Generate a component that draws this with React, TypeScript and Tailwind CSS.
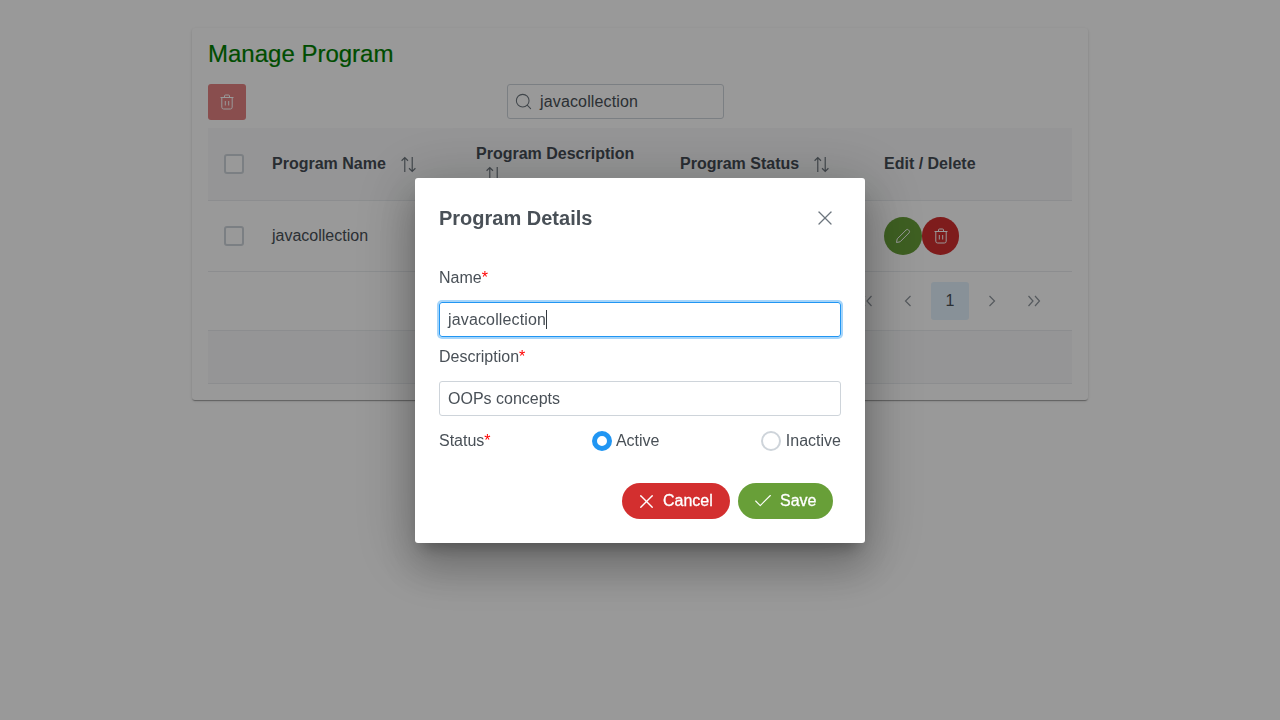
import React from 'react';
import { Search, X, Check } from 'lucide-react';

const TrashIcon: React.FC<{ className?: string }> = ({ className }) => (
    <svg viewBox="0 0 16 16" fill="none" stroke="currentColor" strokeWidth="1" className={className}>
        <path d="M1.5 3.5h13" />
        <path d="M5.5 3.5V2a1 1 0 0 1 1-1h3a1 1 0 0 1 1 1v1.5" />
        <path d="M2.8 3.5v9.7a1.8 1.8 0 0 0 1.8 1.8h6.8a1.8 1.8 0 0 0 1.8-1.8V3.5" />
        <path d="M6.3 7v4.5M9.7 7v4.5" />
    </svg>
);

const PencilIcon: React.FC<{ className?: string }> = ({ className }) => (
    <svg viewBox="0 0 16 16" fill="none" stroke="currentColor" strokeWidth="1" className={className}>
        <path d="M1.5 14.5l.7-3.6 8.9-8.9a1.7 1.7 0 0 1 2.4 0l.5.5a1.7 1.7 0 0 1 0 2.4l-8.9 8.9z" />
    </svg>
);

const SortIcon: React.FC<{ className?: string }> = ({ className }) => (
    <svg viewBox="0 0 16 16" fill="none" stroke="currentColor" strokeWidth="1.1" className={className}>
        <path d="M4.5 15V1.5M1.5 4.5l3-3 3 3" />
        <path d="M11.5 1v13.5M8.5 11.5l3 3 3-3" />
    </svg>
);

// paginator arrows, d differs per direction
const PageArrow: React.FC<{ d: string }> = ({ d }) => (
    <div className="w-[38px] h-[38px] flex items-center justify-center">
        <svg viewBox="0 0 16 16" fill="none" stroke="currentColor" strokeWidth="1.2" className="w-4 h-4">
            <path d={d} />
        </svg>
    </div>
);

const Box: React.FC = () => (
    <div className="w-5 h-5 rounded-[3px] border-2 border-[#ced4da] bg-white"></div>
);

const Required: React.FC = () => <span className="text-[#ff0000]">*</span>;

const App: React.FC = () => {
    return (
        <div className="relative min-h-[720px] bg-white font-['Liberation_Sans',Arial,sans-serif] text-[#495057] text-base">
            <div className="pt-7 flex justify-center">
                <div className="w-[896px] h-[372px] bg-white rounded-[3px] p-4 pt-3 shadow-[0_2px_1px_-1px_rgba(0,0,0,0.2),0_1px_1px_0_rgba(0,0,0,0.14),0_1px_3px_0_rgba(0,0,0,0.12)]">
                    <h1 className="text-2xl leading-7 text-[#008000] [-webkit-text-stroke:0.2px_#008000]">Manage Program</h1>

                    <div className="mt-[16px] h-9 flex items-start">
                        <div className="w-[38px] h-9 rounded-[3px] bg-[#D32F2F]/60 flex items-center justify-center text-white">
                            <TrashIcon className="w-4 h-4" />
                        </div>
                        <div className="ml-[261px] w-[217px] h-[35px] rounded-[3px] border border-[#ced4da] bg-white flex items-center pl-[6px]">
                            <Search className="w-[19px] h-[19px] text-[#6c757d] shrink-0" strokeWidth={1.3} />
                            <span className="ml-[7px] pt-px tracking-[0.15px]">javacollection</span>
                        </div>
                    </div>

                    <div className="mt-2 grid grid-cols-[64px_204px_204px_204px_188px] h-[73px] bg-[#f8f9fa] border-b border-[#e9ecef] items-center font-bold text-[#454c54]">
                        <div className="pl-4"><Box /></div>
                        <div className="flex items-center">
                            Program Name
                            <SortIcon className="ml-[14px] w-[17px] h-[17px] text-[#6c757d]" />
                        </div>
                        <div className="leading-5 pb-0.5">
                            Program Description
                            <SortIcon className="ml-[9px] mt-0.5 w-[17px] h-[17px] text-[#6c757d]" />
                        </div>
                        <div className="flex items-center">
                            Program Status
                            <SortIcon className="ml-[14px] w-[17px] h-[17px] text-[#6c757d]" />
                        </div>
                        <div>Edit / Delete</div>
                    </div>

                    <div className="grid grid-cols-[64px_204px_204px_204px_188px] h-[71px] border-b border-[#e9ecef] items-center">
                        <div className="pl-4"><Box /></div>
                        <div>javacollection</div>
                        <div>OOPs concepts</div>
                        <div>Active</div>
                        <div className="flex">
                            <div className="w-[38px] h-[38px] rounded-full bg-[#689F38] flex items-center justify-center text-white">
                                <PencilIcon className="w-4 h-4" />
                            </div>
                            <div className="w-[37px] h-[38px] rounded-full bg-[#D32F2F] flex items-center justify-center text-white">
                                <TrashIcon className="w-4 h-4" />
                            </div>
                        </div>
                    </div>

                    <div className="h-[58px] flex items-center justify-end pr-[19px] gap-1 text-[#8f969d]">
                        <PageArrow d="M7 3L2.5 8 7 13M13.5 3L9 8l4.5 5" />
                        <PageArrow d="M10.5 3L5.5 8l5 5" />
                        <div className="w-[38px] h-[38px] rounded-[3px] bg-[#E3F2FD] text-[#495057] flex items-center justify-center">1</div>
                        <PageArrow d="M5.5 3l5 5-5 5" />
                        <PageArrow d="M2.5 3L7 8l-4.5 5M9 3l4.5 5L9 13" />
                    </div>

                    <div className="h-[54px] bg-[#f8f9fa] border-y border-[#e9ecef]"></div>
                </div>
            </div>

            {/* modal */}
            <div className="fixed inset-0 bg-black/40 flex items-center justify-center">
                <div className="w-[450px] h-[365px] mt-px bg-white rounded-[3px] shadow-[0_11px_15px_-7px_rgba(0,0,0,0.28),0_24px_38px_3px_rgba(0,0,0,0.18),0_9px_60px_10px_rgba(0,0,0,0.18)]">
                    <div className="h-[80px] px-6 flex items-center justify-between pb-[1px]">
                        <h2 className="text-xl font-bold leading-6">Program Details</h2>
                        <X className="w-6 h-6 mr-1 text-[#6c757d]" strokeWidth={1.3} />
                    </div>

                    <div className="px-6">
                        <div className="h-[18px] mt-[11px] leading-[18px]">Name<Required /></div>
                        <div className="mt-[15px] h-[35px] rounded-[3px] border border-[#2196F3] shadow-[0_0_0_2px_#a6d5fa] flex items-center px-2 tracking-[0.15px]">
                            javacollection<span className="inline-block w-px h-[19px] bg-[#343a40]"></span>
                        </div>
                        <div className="h-[18px] mt-[11px] leading-[18px]">Description<Required /></div>
                        <div className="mt-[15px] h-[35px] rounded-[3px] border border-[#ced4da] flex items-center px-2">OOPs concepts</div>

                        <div className="mt-[15px] h-5 flex items-center justify-between">
                            <div>Status<Required /></div>
                            <div className="flex items-center">
                                <div className="w-5 h-5 rounded-full border-[5px] border-[#2196F3] bg-white"></div>
                                <span className="ml-1">Active</span>
                            </div>
                            <div className="flex items-center">
                                <div className="w-5 h-5 rounded-full border-2 border-[#ced4da] bg-white"></div>
                                <span className="ml-[5px]">Inactive</span>
                            </div>
                        </div>

                        <div className="mt-[32px] flex justify-end gap-2 pr-2 text-white [-webkit-text-stroke:0.3px_white]">
                            <div className="w-[108px] h-9 rounded-full bg-[#D32F2F] flex items-center pl-[13px]">
                                <X className="w-[23px] h-[23px]" strokeWidth={1.4} />
                                <span className="ml-[5px]">Cancel</span>
                            </div>
                            <div className="w-[95px] h-9 rounded-full bg-[#689F38] flex items-center pl-[14px]">
                                <Check className="w-[22px] h-[22px]" strokeWidth={1.2} />
                                <span className="ml-[6px]">Save</span>
                            </div>
                        </div>
                    </div>
                </div>
            </div>
        </div>
    );
};

export default App;
